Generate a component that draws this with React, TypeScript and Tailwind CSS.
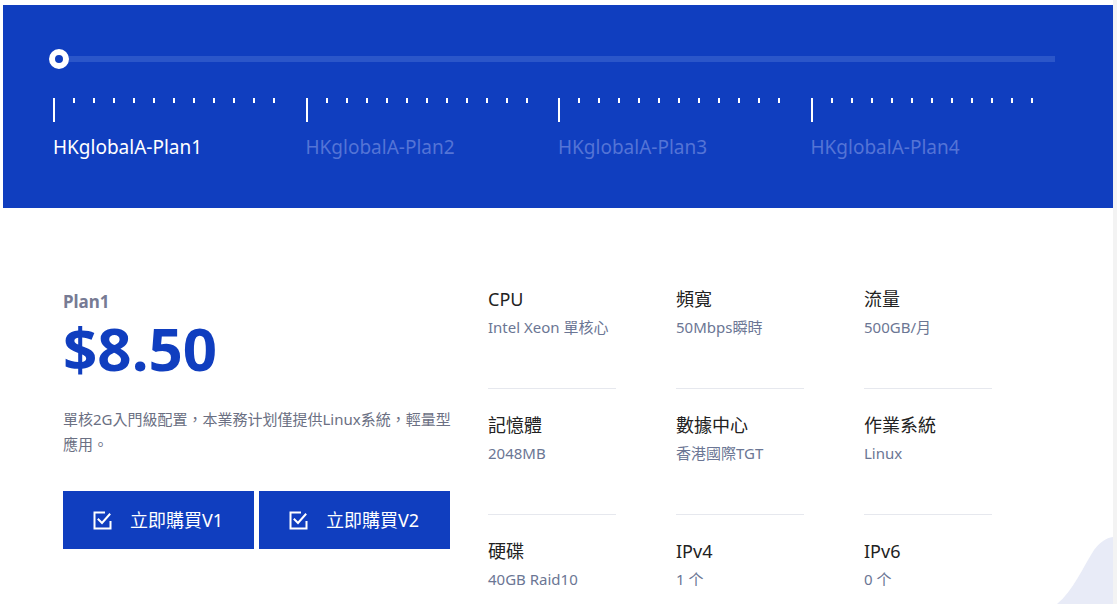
import React from 'react';

const plans = ['HKglobalA-Plan1', 'HKglobalA-Plan2', 'HKglobalA-Plan3', 'HKglobalA-Plan4'];

const specs = [
  { title: 'CPU', value: 'Intel Xeon 單核心' },
  { title: '頻寬', value: '50Mbps瞬時' },
  { title: '流量', value: '500GB/月' },
  { title: '記憶體', value: '2048MB' },
  { title: '數據中心', value: '香港國際TGT' },
  { title: '作業系統', value: 'Linux' },
  { title: '硬碟', value: '40GB Raid10' },
  { title: 'IPv4', value: '1 个' },
  { title: 'IPv6', value: '0 个' },
];

const CheckIcon = () => (
  <svg width="19" height="19" viewBox="0 0 19 19" fill="none" stroke="white" strokeWidth="2">
    <path d="M12 1.5H1.5v16h16V10" />
    <path d="M5.5 8.5l3.5 3.5 7.5-8.5" strokeLinecap="square" />
  </svg>
);

const App: React.FC = () => {
  return (
    <div
      className="flex h-[604px] w-[1117px] overflow-hidden bg-white"
      style={{ fontFamily: '"Noto Sans", "Noto Sans CJK TC", sans-serif' }}
    >
      <div className="relative flex w-[1113px] flex-col pl-[3px] pt-[5px]">
        {/* Plan slider */}
        <div className="h-[203px] bg-[#103ebf] pl-[46px] pt-[44px]">
          <div className="relative flex h-[20px] w-[1006px] items-center">
            <div className="ml-[10px] h-[6px] flex-1 bg-[#2b56c9]" />
            <div className="absolute left-0 top-0 h-[20px] w-[20px] rounded-full border-[6px] border-white bg-[#103ebf]" />
          </div>
          <div className="mt-[29px] grid w-[1014px] grid-cols-4 pl-[4px]">
            {plans.map((p, i) => (
              <div key={p} className="flex flex-col">
                <div className="flex items-start">
                  <div className="h-[24px] w-[2px] bg-white" />
                  {Array.from({ length: 11 }).map((_, j) => (
                    <div key={j} className="ml-[18px] h-[5px] w-[2px] bg-white" />
                  ))}
                </div>
                <div
                  className={`mt-[13px] text-[19px] leading-[24px] ${
                    i === 0 ? 'text-white' : 'text-[#5474d6]'
                  }`}
                >
                  {p}
                </div>
              </div>
            ))}
          </div>
        </div>

        {/* Plan detail */}
        <div className="flex pl-[60px] pt-[79px]">
          <div className="flex w-[392px] flex-col">
            <div className="mt-[4px] text-[17px] font-bold leading-[22px] text-[#777b94]">Plan1</div>
            <div className="mt-[5px] text-[60px] font-bold leading-[60px] text-[#103ebf]">$8.50</div>
            <p className="mt-[29px] text-[15px] leading-[25px] text-[#6b7083]">
              單核2G入門級配置，本業務计划僅提供Linux系統，輕量型應用。
            </p>
            <div className="mt-[34px] flex gap-[5px]">
              {['立即購買V1', '立即購買V2'].map((t) => (
                <button
                  key={t}
                  className="flex h-[58px] w-[191px] items-center bg-[#103ebf] pl-[30px] text-[18px] text-white"
                >
                  <CheckIcon />
                  <span className="ml-[18px]">{t}</span>
                </button>
              ))}
            </div>
          </div>

          <div className="ml-[33px] grid grid-cols-[128px_128px_128px] gap-x-[60px]">
            {specs.map((s, i) => (
              <div key={s.title} className="flex flex-col">
                <div className="text-[18px] leading-[24px] text-[#222222]">{s.title}</div>
                <div className="mt-[6px] text-[15px] leading-[20px] text-[#6b7694]">{s.value}</div>
                {i < 6 && <div className="mb-[24px] mt-[51px] h-px bg-[#e6e8ee]" />}
              </div>
            ))}
          </div>
        </div>

        <svg
          className="absolute bottom-0 right-0"
          width="56"
          height="67"
          viewBox="0 0 56 67"
          fill="#e8ebf7"
        >
          <path d="M0 67 C16 54 26 30 37 13 C43 5 49 1 56 0 L56 67 Z" />
        </svg>
      </div>
      <div className="h-full w-[4px] bg-[#f3f3f3]" />
    </div>
  );
};

export default App;
